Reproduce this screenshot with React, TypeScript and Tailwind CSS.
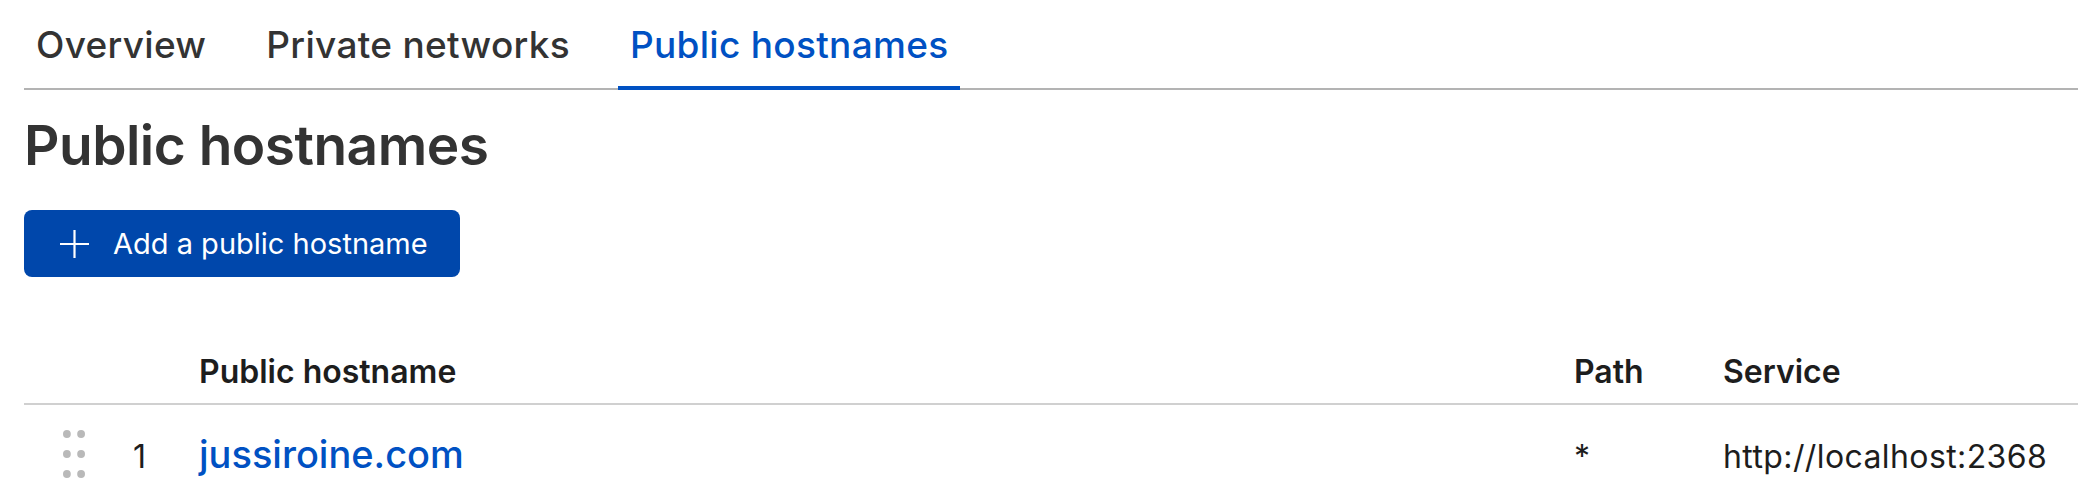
const tabs = [
  { label: 'Overview', active: false },
  { label: 'Private networks', active: false },
  { label: 'Public hostnames', active: true },
];

const rows = [
  { order: 1, hostname: 'jussiroine.com', path: '*', service: 'http://localhost:2368' },
];

function PlusIcon() {
  return (
    <svg width="29" height="28" viewBox="0 0 29 28" fill="none" stroke="currentColor" strokeWidth="2.2">
      <path d="M14.5 0v28M0 14h29" />
    </svg>
  );
}

function DragHandle() {
  return (
    <svg width="22" height="48" viewBox="0 0 22 48" className="text-[#b9b9b9]">
      {[4, 24, 44].map((cy) => (
        <g key={cy}>
          <circle cx="3.9" cy={cy} r="3.9" fill="currentColor" />
          <circle cx="18.1" cy={cy} r="3.9" fill="currentColor" />
        </g>
      ))}
    </svg>
  );
}

export default function App() {
  return (
    <div className="min-h-[500px] bg-white pl-6 font-['Inter','Liberation_Sans',sans-serif] text-[#333]">
      <nav className="flex gap-9 border-b-2 border-[#b3b3b3]">
        {tabs.map((tab) => (
          <div
            key={tab.label}
            className={`-mb-[2px] border-b-4 px-3 pt-[23px] pb-[19px] text-[37px] leading-[44px] font-medium tracking-[0.3px] ${
              tab.active ? 'border-[#0051c3] text-[#0051c3]' : 'border-transparent text-[#333]'
            }`}
          >
            {tab.label}
          </div>
        ))}
      </nav>

      <h1 className="mt-[21px] text-[55px] leading-[68px] font-semibold tracking-[-0.5px] text-[#333]">
        Public hostnames
      </h1>

      <button className="mt-[31px] flex h-[67px] items-center gap-6 rounded-[8px] bg-[#0047ab] pl-9 pr-8 text-[29px] text-white">
        <PlusIcon />
        <span>Add a public hostname</span>
      </button>

      <div className="mt-[75px]">
        <div className="flex border-b-2 border-[#d0d0d0] pb-[11px] text-[32px] leading-[40px] font-semibold text-[#1d1d1d]">
          <div className="w-[175px] shrink-0" />
          <div className="flex-1">Public hostname</div>
          <div className="w-[149px] shrink-0">Path</div>
          <div className="w-[355px] shrink-0">Service</div>
        </div>

        {rows.map((row) => (
          <div key={row.order} className="flex h-[98px] items-center text-[32px] leading-[40px] tracking-[0.4px] text-[#1d1d1d]">
            <div className="w-[87px] shrink-0 pl-[39px]">
              <DragHandle />
            </div>
            <div className="w-[88px] shrink-0 pl-[22px] pt-[6px]">{row.order}</div>
            <div className="flex-1 text-[38px] leading-[48px] font-medium tracking-normal text-[#0051c3]">
              {row.hostname}
            </div>
            <div className="w-[149px] shrink-0 pt-[6px]">{row.path}</div>
            <div className="w-[355px] shrink-0 pt-[6px]">{row.service}</div>
          </div>
        ))}
      </div>
    </div>
  );
}
